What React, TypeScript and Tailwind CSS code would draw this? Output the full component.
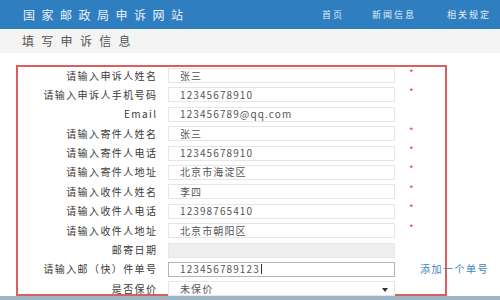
import React from "react";

const rows: { label: string; value: string; star?: boolean; kind?: "disabled" | "focus" | "select" }[] = [
  { label: "请输入申诉人姓名", value: "张三", star: true },
  { label: "请输入申诉人手机号码", value: "12345678910", star: true },
  { label: "Email", value: "123456789@qq.com" },
  { label: "请输入寄件人姓名", value: "张三", star: true },
  { label: "请输入寄件人电话", value: "12345678910", star: true },
  { label: "请输入寄件人地址", value: "北京市海淀区", star: true },
  { label: "请输入收件人姓名", value: "李四", star: true },
  { label: "请输入收件人电话", value: "12398765410", star: true },
  { label: "请输入收件人地址", value: "北京市朝阳区", star: true },
  { label: "邮寄日期", value: "", kind: "disabled" },
  { label: "请输入邮（快）件单号", value: "123456789123", kind: "focus" },
  { label: "是否保价", value: "未保价", kind: "select" },
];

export default function App() {
  return (
    <div
      className="w-[500px] h-[300px] overflow-hidden bg-white flex flex-col"
      style={{ fontFamily: '"Noto Sans CJK SC", "Noto Sans", sans-serif' }}
    >
      <div className="h-[29px] shrink-0 bg-[#2e7ec0] flex items-center">
        <div className="ml-[23px] text-[12px] tracking-[6.5px] text-[#e8f1f8] leading-none">国家邮政局申诉网站</div>
        <div className="ml-auto flex items-center text-[9px] text-[#e6eef6] leading-none tracking-[2px]">
          <span className="w-[50px]">首页</span>
          <span className="w-[75px]">新闻信息</span>
          <span className="w-[53px]">相关规定</span>
        </div>
      </div>
      <div className="h-[24px] shrink-0 bg-[#f4f4f4] flex items-center">
        <div className="ml-[22px] text-[12px] tracking-[7.3px] text-[#555] leading-none">填写申诉信息</div>
      </div>
      <div className="h-[12px] shrink-0" />
      <div className="ml-[16px] w-[431px] h-[231px] shrink-0 border-2 border-[#dc5f5f] pt-[1px] flex flex-col gap-y-[4.4px] overflow-visible">
        {rows.map((r, i) => (
          <div key={i} className="h-[15px] shrink-0 flex items-center">
            <div className="w-[138px] shrink-0 whitespace-nowrap text-right text-[10px] tracking-[1.4px] text-[#3a3a3a] leading-none">
              <span className="mr-[-1.4px]">{r.label}</span>
            </div>
            <div
              className={
                "ml-[12px] w-[227px] shrink-0 h-[15px] flex items-center pl-[11px] text-[10px] tracking-[1.1px] text-[#555] leading-none relative whitespace-nowrap " +
                (r.kind === "disabled"
                  ? "bg-[#efefef] border border-[#e8e8e8]"
                  : r.kind === "focus"
                  ? "bg-white border border-[#b5b5b5]"
                  : "bg-white border border-[#e6e6e6]")
              }
            >
              {r.value}
              {r.kind === "focus" && <span className="ml-[1px] w-[1px] h-[10px] bg-[#333]" />}
              {r.kind === "select" && (
                <span className="absolute right-[6px] top-[6px] w-0 h-0 border-l-[3px] border-r-[3px] border-t-[4px] border-l-transparent border-r-transparent border-t-[#333]" />
              )}
            </div>
            <div className="ml-[14px] w-[11px] shrink-0 text-[10px] text-[#d9534f] leading-none -mt-[6px]">
              {r.star ? "*" : ""}
            </div>
            {r.kind === "focus" && (
              <div className="text-[10px] tracking-[1.5px] text-[#3b85bd] leading-none whitespace-nowrap">
                添加一个单号
              </div>
            )}
          </div>
        ))}
      </div>
      <div className="flex-1 bg-[#9db6c6]" />
    </div>
  );
}
